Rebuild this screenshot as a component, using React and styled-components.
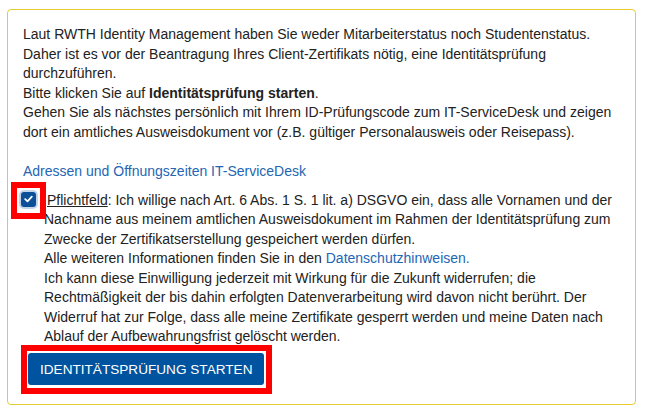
import React from 'react'
import styled, { createGlobalStyle } from 'styled-components'

const GlobalStyle = createGlobalStyle`
  html, body {
    margin: 0;
    padding: 0;
    background: #fff;
  }
  body {
    font-family: "Liberation Sans", Arial, sans-serif;
    font-size: 14px;
    line-height: 19.5px;
    color: #222;
  }
`

const Page = styled.div`
  padding: 9px 10px 10px 7px;
`

const Card = styled.div`
  border: 1px solid #e6cb30;
  border-radius: 4px;
  padding: 15px 15px 10px 15px;
`

const Intro = styled.p`
  margin: 0 0 20px 0;
`

const Link = styled.a`
  color: #2366b3;
  text-decoration: none;
`

const LinkLine = styled.div`
  margin-bottom: 9px;
`

const FormCheck = styled.div`
  position: relative;
  padding-left: 21px;
`

// red marker frame drawn around the highlighted controls
const Highlight = styled.span`
  display: inline-block;
  border: 6px solid #f00;
  padding: ${({ $pad }) => $pad || '2px'};
`

const CheckHighlight = styled(Highlight)`
  position: absolute;
  left: -12px;
  top: -9px;
  line-height: 0;
`

const CheckBox = styled.span`
  width: 15px;
  height: 15px;
  margin: 2px;
  border-radius: 3px;
  background: #0b4f98;
  box-shadow: 0 0 0 2px #c4d5ea;
  display: flex;
  align-items: center;
  justify-content: center;
`

const Label = styled.label`
  display: block;
  text-indent: 3px;
`

const Required = styled.span`
  text-decoration: underline;
`

const ButtonHighlight = styled(Highlight)`
  margin: -2px 0 0 -2px;
  line-height: 0;
`

const Button = styled.button`
  display: block;
  background: #00549f;
  color: #fff;
  border: none;
  border-radius: 3px;
  font-family: "Liberation Sans", Arial, sans-serif;
  font-size: 13.6px;
  line-height: 19.5px;
  padding: 7px 12px 6px 12px;
  text-transform: uppercase;
`

const App = () => (
  <>
    <GlobalStyle />
    <Page>
      <Card>
        <Intro>
          Laut RWTH Identity Management haben Sie weder Mitarbeiterstatus noch Studentenstatus.<br />
          Daher ist es vor der Beantragung Ihres Client-Zertifikats nötig, eine Identitätsprüfung durchzuführen.<br />
          Bitte klicken Sie auf <b>Identitätsprüfung starten</b>.<br />
          Gehen Sie als nächstes persönlich mit Ihrem ID-Prüfungscode zum IT-ServiceDesk und zeigen dort ein amtliches Ausweisdokument vor (z.B. gültiger Personalausweis oder Reisepass).
        </Intro>
        <LinkLine>
          <Link href="#">Adressen und Öffnungszeiten IT-ServiceDesk</Link>
        </LinkLine>
        <FormCheck>
          <CheckHighlight $pad="2px 2px 4px 2px">
            <CheckBox>
              <svg width="9" height="8" viewBox="0 0 9 8">
                <path d="M1.2 4.2 L3.5 6.3 L7.8 1.6" stroke="#fff" strokeWidth="1.8" fill="none" strokeLinecap="round" strokeLinejoin="round" />
              </svg>
            </CheckBox>
          </CheckHighlight>
          <Label>
            <Required>Pflichtfeld</Required>: Ich willige nach Art. 6 Abs. 1 S. 1 lit. a) DSGVO ein, dass alle Vornamen und der Nachname aus meinem amtlichen Ausweisdokument im Rahmen der Identitätsprüfung zum Zwecke der Zertifikatserstellung gespeichert werden dürfen.<br />
            Alle weiteren Informationen finden Sie in den <Link href="#">Datenschutzhinweisen.</Link><br />
            Ich kann diese Einwilligung jederzeit mit Wirkung für die Zukunft widerrufen; die Rechtmäßigkeit der bis dahin erfolgten Datenverarbeitung wird davon nicht berührt. Der Widerruf hat zur Folge, dass alle meine Zertifikate gesperrt werden und meine Daten nach Ablauf der Aufbewahrungsfrist gelöscht werden.
          </Label>
        </FormCheck>
        <ButtonHighlight $pad="2px 2px 3px 1px">
          <Button>Identitätsprüfung starten</Button>
        </ButtonHighlight>
      </Card>
    </Page>
  </>
)

export default App
